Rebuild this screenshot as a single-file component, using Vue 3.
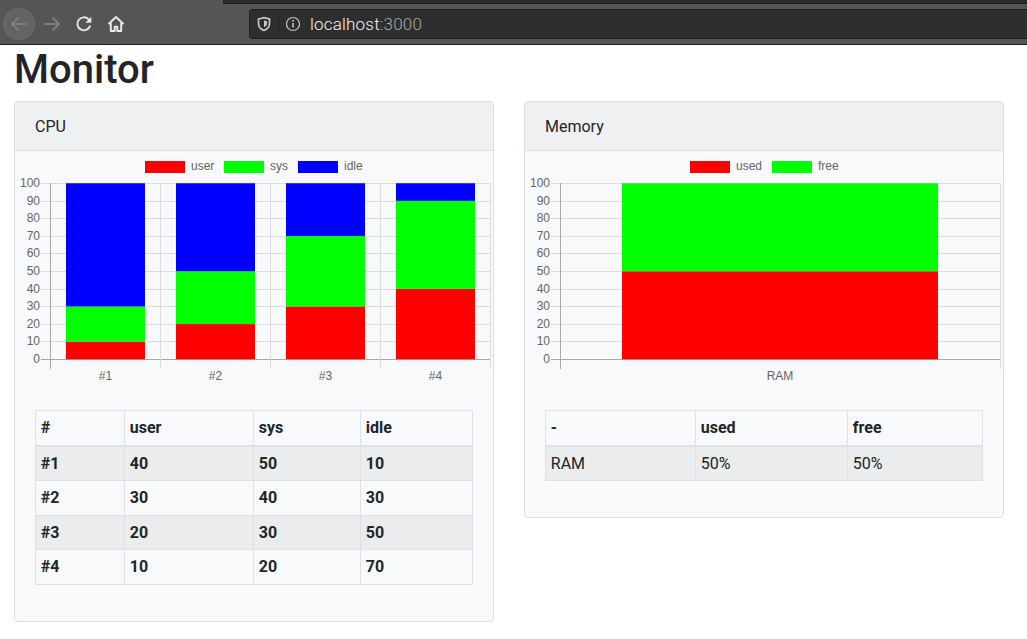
<template>
  <div class="page">
    <header class="toolbar">
      <div class="strip"></div>
      <button class="nav back">
        <svg width="20" height="20" viewBox="0 0 20 20"><path d="M17.500 10H3.500M9.500 3.500 3 10l6.500 6.500" fill="none" stroke="#848484" stroke-width="1.700" /></svg>
      </button>
      <button class="nav forward">
        <svg width="20" height="20" viewBox="0 0 20 20"><path d="M2.500 10h14M10.500 3.500 17 10l-6.500 6.500" fill="none" stroke="#868686" stroke-width="1.700" /></svg>
      </button>
      <button class="nav">
        <svg width="20" height="20" viewBox="0 0 20 20"><path d="M16.200 11.500A6.500 6.500 0 1 1 14.600 5.300L16.500 7.500" fill="none" stroke="#e8e8e8" stroke-width="1.900" /><path d="M17.300 2.800v6h-6z" fill="#e8e8e8" /></svg>
      </button>
      <button class="nav">
        <svg width="20" height="20" viewBox="0 0 20 20"><path d="M2.500 10 10 3l7.500 7" fill="none" stroke="#e8e8e8" stroke-width="2" stroke-linejoin="round" /><path d="M4.800 9v8h3.900v-4.200h2.600V17h3.900V9" fill="none" stroke="#e8e8e8" stroke-width="2" stroke-linejoin="round" /></svg>
      </button>
      <div class="urlbar">
        <svg width="16" height="16" viewBox="0 0 16 16"><path d="M2.500 3 8 1.600 13.500 3v4.500c0 3.500-2.300 5.800-5.500 7-3.200-1.200-5.500-3.500-5.500-7z" fill="none" stroke="#c8c8c8" stroke-width="1.700" /><path d="M8 4.500 11 5.300v2.200c0 1.800-1.200 3-3 3.800z" fill="#c8c8c8" /></svg>
        <span class="sep"></span>
        <svg class="info" width="16" height="16" viewBox="0 0 16 16"><circle cx="8" cy="8" r="6.500" fill="none" stroke="#c8c8c8" stroke-width="1.200" /><path d="M8 7v4.500" stroke="#c8c8c8" stroke-width="1.500" /><circle cx="8" cy="4.800" r="1" fill="#c8c8c8" /></svg>
        <span class="host">localhost</span><span class="port">:3000</span>
      </div>
    </header>

    <main class="content">
      <h1>Monitor</h1>
      <div class="cards">
        <section v-for="card in cards" :key="card.title" class="card">
          <div class="card-header">{{ card.title }}</div>
          <svg class="chart" width="478" height="239" viewBox="0 0 478 239">
            <g class="legend">
              <template v-for="item in card.legend" :key="item.label">
                <rect :x="item.x" y="10" width="40" height="12" :fill="item.color" />
                <text :x="item.x + 46" y="19">{{ item.label }}</text>
              </template>
            </g>
            <g v-for="tick in ticks" :key="tick">
              <line x1="26" x2="475.500" :y1="tickY(tick)" :y2="tickY(tick)" :stroke="tick === 0 ? '#a8a8a8' : '#dcdcdc'" />
              <text class="y-label" x="25" :y="tickY(tick) + 3.5">{{ tick }}</text>
            </g>
            <line
              v-for="(x, i) in card.grid"
              :key="x"
              :x1="x + 0.5"
              :x2="x + 0.5"
              y1="32"
              y2="218"
              :stroke="i === 0 ? '#a8a8a8' : '#dcdcdc'"
            />
            <g v-for="bar in card.bars" :key="bar.label">
              <rect
                v-for="seg in bar.segments"
                :key="seg.color"
                :x="bar.x"
                :y="seg.y"
                :width="bar.width"
                :height="seg.height"
                :fill="seg.color"
              />
              <text class="x-label" :x="bar.x + bar.width / 2" y="229">{{ bar.label }}</text>
            </g>
          </svg>
          <div class="card-body">
            <table>
              <thead>
                <tr>
                  <th v-for="col in card.columns" :key="col.name" :class="col.cls">{{ col.name }}</th>
                </tr>
              </thead>
              <tbody>
                <tr v-for="row in card.rows" :key="row[0]">
                  <component :is="card.boldRows ? 'th' : 'td'" v-for="(value, i) in row" :key="i">{{ value }}</component>
                </tr>
              </tbody>
            </table>
          </div>
        </section>
      </div>
    </main>
  </div>
</template>

<script setup>
const RED = "#ff0000";
const GREEN = "#00ff00";
const BLUE = "#0000ff";

const ticks = [0, 10, 20, 30, 40, 50, 60, 70, 80, 90, 100];

const tickY = (value) => 208.5 - value * 1.76;

const stack = (x, width, label, stops) => {
  let from = 0;
  const segments = stops.map(([to, color]) => {
    const seg = { color, y: tickY(to) - 0.25, height: (to - from) * 1.76 };
    from = to;
    return seg;
  });
  return { x, width, label, segments };
};

const cards = [
  {
    title: "CPU",
    boldRows: true,
    legend: [
      { label: "user", color: RED, x: 130 },
      { label: "sys", color: GREEN, x: 209 },
      { label: "idle", color: BLUE, x: 283 },
    ],
    grid: [35, 145, 255, 365, 475],
    bars: [
      stack(51, 79, "#1", [[10, RED], [30, GREEN], [100, BLUE]]),
      stack(161, 79, "#2", [[20, RED], [50, GREEN], [100, BLUE]]),
      stack(271, 79, "#3", [[30, RED], [70, GREEN], [100, BLUE]]),
      stack(381, 79, "#4", [[40, RED], [90, GREEN], [100, BLUE]]),
    ],
    columns: [
      { name: "#", cls: "w89" },
      { name: "user", cls: "w129" },
      { name: "sys", cls: "w107" },
      { name: "idle" },
    ],
    rows: [
      ["#1", "40", "50", "10"],
      ["#2", "30", "40", "30"],
      ["#3", "20", "30", "50"],
      ["#4", "10", "20", "70"],
    ],
  },
  {
    title: "Memory",
    boldRows: false,
    legend: [
      { label: "used", color: RED, x: 165 },
      { label: "free", color: GREEN, x: 247 },
    ],
    grid: [35, 475],
    bars: [stack(97, 316, "RAM", [[50, RED], [100, GREEN]])],
    columns: [
      { name: "-", cls: "w150" },
      { name: "used", cls: "w152" },
      { name: "free" },
    ],
    rows: [["RAM", "50%", "50%"]],
  },
];
</script>

<style>
body {
  background: #fff;
}
</style>

<style scoped>
.page {
  font-family: Roboto, "Liberation Sans", sans-serif;
  color: #212529;
}

.toolbar {
  position: relative;
  display: flex;
  align-items: center;
  height: 45px;
  box-sizing: border-box;
  padding: 4px 0 0 3px;
  background: #555;
  border-bottom: 1px solid #1c1c1c;
}

.strip {
  position: absolute;
  top: 0;
  left: 223px;
  right: 0;
  height: 3px;
  background: #2b2b2b;
  border-bottom: 1px solid #1c1c1c;
}

.nav {
  display: flex;
  flex: none;
  align-items: center;
  justify-content: center;
  width: 32px;
  height: 32px;
  padding: 0;
  border: none;
  border-radius: 50%;
  background: none;
}

.back {
  background: #636363;
  box-shadow: inset 0 0 0 1px #6a6a6a;
}

.forward {
  margin-left: 1px;
}

.urlbar {
  display: flex;
  flex: 1;
  align-items: center;
  box-sizing: border-box;
  height: 30px;
  margin-left: 117px;
  padding-left: 6px;
  background: #2e2e2e;
  border: 1px solid #1f1f1f;
  border-right: none;
  border-radius: 4px 0 0 4px;
  font-size: 17px;
  font-weight: 300;
  letter-spacing: 0.2px;
}

.sep {
  width: 1px;
  height: 22px;
  margin: 0 6px;
  background: #202020;
}

.info {
  margin-right: 9px;
}

.host {
  color: #f4f4f4;
}

.port {
  color: #a6a6a6;
}

.content {
  padding: 0 23px 0 14px;
}

h1 {
  margin: 0 0 8px;
  padding-top: 1px;
  font-size: 40px;
  font-weight: 500;
  line-height: 47px;
}

.cards {
  display: flex;
  align-items: flex-start;
  gap: 30px;
}

.card {
  box-sizing: border-box;
  width: 480px;
  flex: none;
  background: #f8f9fa;
  border: 1px solid #dcdfe2;
  border-radius: 4px;
}

.card-header {
  box-sizing: border-box;
  height: 49px;
  padding: 1px 20px 0;
  line-height: 48px;
  background: #eff0f2;
  border-bottom: 1px solid #dcdfe2;
  border-radius: 3px 3px 0 0;
}

.chart {
  display: block;
  opacity: 0.999;
}

.chart line {
  shape-rendering: crispEdges;
}

.chart text {
  font-family: "Liberation Sans", sans-serif;
  font-size: 12px;
  fill: #666;
}

.chart .y-label {
  text-anchor: end;
}

.chart .x-label {
  text-anchor: middle;
}

.card-body {
  padding: 20px 20px 36px;
}

table {
  width: 100%;
  border-collapse: collapse;
  table-layout: fixed;
}

th,
td {
  box-sizing: border-box;
  padding: 4.800px;
  border: 1px solid #dee2e6;
  text-align: left;
  line-height: 24px;
  font-size: 16px;
}

th {
  font-weight: 700;
}

thead th {
  border-bottom-width: 2px;
}

tbody tr:nth-child(odd) {
  background: #ebeced;
}

tbody tr:first-child > * {
  padding-top: 5.300px;
  padding-bottom: 4.300px;
}

.w89 {
  width: 89px;
}

.w129 {
  width: 129px;
}

.w107 {
  width: 107px;
}

.w150 {
  width: 150px;
}

.w152 {
  width: 152px;
}
</style>
